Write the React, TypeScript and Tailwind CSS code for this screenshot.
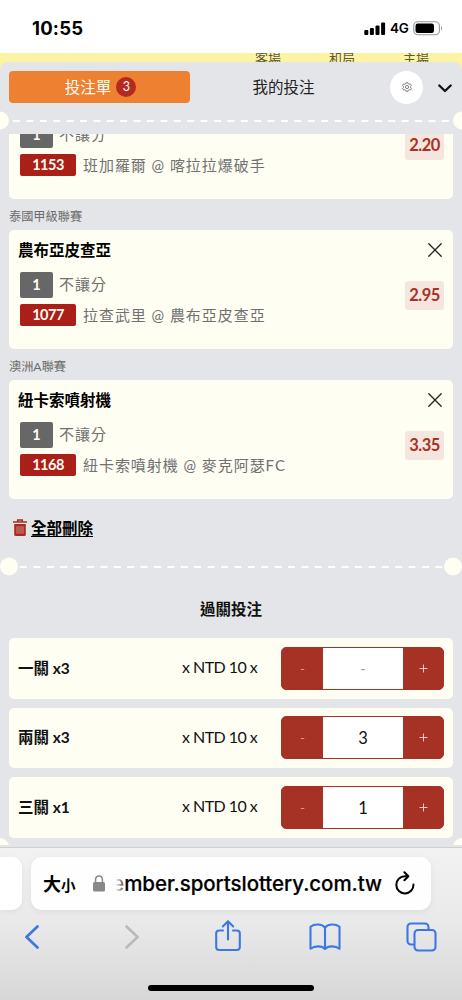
import React from "react";

const UI = "font-[Lato,'Noto_Sans_CJK_TC',sans-serif]";

type Bet = { league: string; pick: string; code: string; match: string; odds: string };

const bets: Bet[] = [
  { league: "", pick: "班加羅爾", code: "1153", match: "班加羅爾 @ 喀拉拉爆破手", odds: "2.20" },
  { league: "泰國甲級聯賽", pick: "農布亞皮查亞", code: "1077", match: "拉查武里 @ 農布亞皮查亞", odds: "2.95" },
  { league: "澳洲A聯賽", pick: "紐卡索噴射機", code: "1168", match: "紐卡索噴射機 @ 麥克阿瑟FC", odds: "3.35" },
];

const parlays = [
  { label: "一關 x3", value: "" },
  { label: "兩關 x3", value: "3" },
  { label: "三關 x1", value: "1" },
];

function StatusBar() {
  return (
    <div className="flex h-[53px] shrink-0 items-start justify-between bg-white pl-8 pr-[19px] pt-[18px]">
      <span className="font-[Inter,sans-serif] text-[18.5px] font-bold leading-5 tracking-[0.2px] text-black">10:55</span>
      <div className="flex h-5 items-center text-black">
        <svg width="22" height="13" viewBox="0 0 22 13" fill="currentColor">
          <rect x="0.3" y="8" width="4" height="5" rx="1" />
          <rect x="5.9" y="6" width="4" height="7" rx="1" />
          <rect x="11.5" y="3.4" width="4" height="9.6" rx="1" />
          <rect x="17.1" y="0.4" width="4" height="12.6" rx="1" />
        </svg>
        <span className="ml-[4px] w-[19px] font-[Inter,sans-serif] text-[13.5px] font-semibold leading-5 tracking-[-0.2px]">4G</span>
        <svg className="ml-[4px]" width="30" height="15" viewBox="0 0 30 15">
          <rect x="0.8" y="0.8" width="25.6" height="13" rx="4" fill="none" stroke="#999" strokeWidth="1.1" />
          <rect x="2.5" y="2.5" width="18.5" height="9.6" rx="2.3" fill="#000" />
          <path d="M28 5.2c1.4.5 1.4 3.7 0 4.2z" fill="#999" />
        </svg>
      </div>
    </div>
  );
}

function Gear() {
  return (
    <svg width="10" height="10" viewBox="0 0 20 20" fill="none" stroke="#444" strokeWidth="1.3" strokeLinejoin="round">
      <path d="M8 1.5h4l.6 2.2 2 .9 2.1-1 2 3.2-1.5 1.7v3l1.5 1.7-2 3.2-2.1-1-2 .9-.6 2.2H8l-.6-2.2-2-.9-2.1 1-2-3.2 1.5-1.7v-3L1.3 6.8l2-3.2 2.1 1 2-.9z" />
      <circle cx="10" cy="10" r="3.2" />
    </svg>
  );
}

function Dashes({ wide = false }: { wide?: boolean }) {
  return (
    <svg
      className={wide ? "w-full shrink-0" : "-mx-[9px] w-[462px] shrink-0"}
      width="462"
      height="19"
      viewBox="0 0 462 19"
    >
      <line
        x1={wide ? 13 : 20}
        x2={wide ? 450 : 443}
        y1="10"
        y2="10"
        stroke="#fffffa"
        strokeWidth="2.2"
        strokeDasharray="7 6.4"
      />
      <circle cx={wide ? 0 : 9} cy="9.5" r="9" fill="#fffef2" />
      <circle cx={wide ? 462 : 453} cy="9.5" r="9" fill="#fffef2" />
    </svg>
  );
}

function BetCard({ bet }: { bet: Bet }) {
  return (
    <div>
      <div className="flex h-[31px] items-center pt-[5px] text-[12.2px] leading-4 text-[#6b6b6b]">{bet.league}</div>
      <div className="flex h-[119px] justify-between rounded-[5px] bg-[#fefef3] pl-[9px] pr-[9px]">
        <div>
          <div className="mt-[10px] h-5 text-[15.5px] font-bold leading-5 text-black">{bet.pick}</div>
          <div className="ml-[2px] mt-3 flex h-[26px] items-center">
            <span className="flex h-[26px] w-[33px] items-center justify-center rounded-[2px] bg-[#676767] pb-px text-[14.5px] font-bold text-[#fefef3]">1</span>
            <span className="ml-[6px] pb-[2px] text-[15px] leading-5 tracking-[0.95px] text-[#717171]">不讓分</span>
          </div>
          <div className="ml-[2px] mt-[6px] flex h-[22px] items-center">
            <span className="flex h-[22px] w-14 items-center justify-center rounded-[2px] bg-[#aa1f18] text-[14.5px] font-bold tracking-[-0.5px] text-[#fefef3]">{bet.code}</span>
            <span className="ml-[7px] whitespace-nowrap text-[15px] leading-5 tracking-[0.95px] text-[#717171]">{bet.match}</span>
          </div>
        </div>
        <div className="flex flex-col items-end">
          <svg className="mr-[2px] mt-[13px]" width="14" height="14" viewBox="0 0 14 14" stroke="#222" strokeWidth="1.3" strokeLinecap="round">
            <path d="M.8.8l12.4 12.4M13.2.8L.8 13.2" />
          </svg>
          <div className="mt-6 flex h-[29px] w-[39px] items-center justify-center rounded-[3px] bg-[#f4e6df] text-[16.5px] font-bold tracking-[-0.5px] text-[#a83226]">{bet.odds}</div>
        </div>
      </div>
    </div>
  );
}

function Stepper({ value }: { value: string }) {
  return (
    <div className="flex h-[43px] w-[163px] overflow-hidden rounded-[5px] border border-[#a63225] bg-[#a63225] text-[14px] font-light text-[#f3d6d0]">
      <button className="flex w-[41px] items-center justify-center">-</button>
      <div className="flex w-[80px] items-center justify-center bg-white text-[16.5px] font-normal text-[#111]">
        {value ? <span className="pt-[2px]">{value}</span> : <span className="text-[15px] text-[#999]">-</span>}
      </div>
      <button className="flex flex-1 items-center justify-center">
        <svg width="9" height="9" viewBox="0 0 9 9" stroke="#f3d6d0" strokeWidth="0.9">
          <path d="M.5 4.5h8M4.5.5v8" />
        </svg>
      </button>
    </div>
  );
}

function Trash() {
  return (
    <svg width="14" height="17" viewBox="0 0 14 17">
      <path d="M4.7 2.8V1.1h4.6v1.7M0 3.1h14" fill="none" stroke="#a82c22" strokeWidth="1.5" />
      <path d="M1.2 5h11.6v10.4q0 1.5-1.500 1.500H2.700q-1.500 0-1.500-1.500z" fill="#a82c22" />
      <path d="M4 7.200v7.500M6 7.200v7.500M8 7.200v7.500M10 7.200v7.500" stroke="#e2b0a9" strokeWidth=".7" />
    </svg>
  );
}

function BrowserBar() {
  return (
    <div className="flex h-[153px] shrink-0 flex-col border-t border-[#cfcfcf] bg-linear-to-b from-[#f2f2f3] via-[#e9e9ea] to-[#d8d7d8] pt-[9px]">
      <div className="flex h-[53px] gap-[9px]">
        <div className="w-[22px] rounded-r-[10px] bg-white shadow-[0_2px_6px_rgba(0,0,0,0.05)]" />
        <div className="flex w-[400px] items-center rounded-[11px] bg-[#fefefe] pl-3 shadow-[0_2px_6px_rgba(0,0,0,0.06)]">
          <div className="flex w-[34px] shrink-0 items-baseline whitespace-nowrap font-['Noto_Sans_CJK_TC',sans-serif] font-bold leading-6 text-black">
            <span className="text-[18px]">大</span>
            <span className="text-[14.5px]">小</span>
          </div>
          <svg className="ml-[16px] shrink-0" width="12" height="17" viewBox="0 0 12 17">
            <rect x="0" y="7" width="12" height="9.5" rx="1.5" fill="#88888b" />
            <path d="M2.6 8V4.300a3.4 3.4 0 0 1 6.800 0V8" fill="none" stroke="#88888b" strokeWidth="1.5" />
          </svg>
          <div className="ml-2 flex w-[269px] shrink-0 justify-end whitespace-nowrap font-[Inter,sans-serif] text-[20.5px] font-medium leading-7 tracking-[-0.05px] text-black [-webkit-text-stroke:0.2px]">
            <span className="bg-linear-to-r from-white from-30% to-[#555] bg-clip-text text-transparent [-webkit-text-stroke:0]">e</span>
            <span>mber.sportslottery.com.tw</span>
          </div>
          <svg className="ml-[13px] shrink-0 -translate-y-[1px]" width="20" height="24" viewBox="0 0 20 24" fill="none" stroke="#000" strokeWidth="2" strokeLinecap="round" strokeLinejoin="round">
            <path d="M18.500 13.600A8.600 8.600 0 1 1 9.900 5.200H13.200M9.400 1.300l4 4-4 4" />
          </svg>
        </div>
      </div>
      <div className="mt-[7px] flex h-10 items-center pl-[25px] pr-[25px] text-[#3b78e7]">
        <svg width="14" height="24" viewBox="0 0 14 24" fill="none" stroke="currentColor" strokeWidth="2.7" strokeLinecap="round" strokeLinejoin="round">
          <path d="M12.5 1.5L1.5 12l11 10.5" />
        </svg>
        <svg className="ml-[86px]" width="14" height="24" viewBox="0 0 14 24" fill="none" stroke="#b9b9bb" strokeWidth="2.6" strokeLinecap="round" strokeLinejoin="round">
          <path d="M1.5 1.5L12.5 12l-11 10.5" />
        </svg>
        <svg className="ml-[76px] -translate-y-px" width="26" height="32" viewBox="0 0 26 32" fill="none" stroke="currentColor" strokeWidth="2.100" strokeLinecap="round" strokeLinejoin="round">
          <path d="M8 10.500H4.200a3 3 0 0 0-3 3V27a3 3 0 0 0 3 3h17.600a3 3 0 0 0 3-3V13.500a3 3 0 0 0-3-3H18M13 19.500V1.500M7.800 6.400L13 1.200l5.200 5.200" />
        </svg>
        <svg className="ml-[68px]" width="32" height="28" viewBox="0 0 32 28" fill="none" stroke="currentColor" strokeWidth="2.100" strokeLinejoin="round">
          <path d="M16 4.500C13 .8 5.500.6 1.500 3.800v22c4-3.300 11.500-3.300 14.500.2 3-3.500 10.500-3.500 14.500-.2v-22C26.500.6 19 .8 16 4.500zM16 4.500V26" />
        </svg>
        <svg className="ml-[65px]" width="31" height="30" viewBox="0 0 31 30" fill="none" stroke="currentColor" strokeWidth="2.100">
          <path d="M8.500 22.500H5A3.500 3.500 0 0 1 1.500 19V5A3.500 3.500 0 0 1 5 1.500h14A3.500 3.500 0 0 1 22.500 5v3" />
          <rect x="8.500" y="8" width="21" height="20.500" rx="3.500" />
        </svg>
      </div>
      <div className="mt-[28px] flex justify-center">
        <div className="h-[6px] w-[166px] rounded-full bg-black" />
      </div>
    </div>
  );
}

export default function App() {
  return (
    <div className={`${UI} flex h-[1000px] w-[462px] flex-col overflow-hidden bg-white`}>
      <StatusBar />
      <div className="flex h-[794px] shrink-0 flex-col overflow-hidden bg-[#fcf3a3]">
        <div className="flex h-[9px] shrink-0 overflow-hidden pl-[231px] text-[13px] leading-[14px] text-[#5e5839]">
          <div className="-mt-[2px] w-[74px] text-center">客場</div>
          <div className="-mt-[2px] w-[74px] text-center">和局</div>
          <div className="-mt-[2px] w-[74px] text-center">主場</div>
        </div>
        <div className="flex h-[785px] shrink-0 flex-col overflow-hidden rounded-t-[8px] bg-[#e4e5e8]">
          <div className="flex h-[49px] shrink-0 items-center pl-[9px] pt-px">
            <div className="flex h-[32px] w-[181px] items-center justify-center rounded-[4px] bg-[#ee8032] pl-[2px] text-[15.5px] text-[#fefef3]">
              <span className="leading-5">投注單</span>
              <span className="ml-[5px] flex h-5 w-5 items-center justify-center rounded-full bg-[#b52a1f] text-[12.5px]">3</span>
            </div>
            <div className="w-[187px] text-center text-[15.5px] leading-5 text-[#222]">我的投注</div>
            <div className="ml-[13px] flex h-[33px] w-[33px] items-center justify-center rounded-full bg-white">
              <Gear />
            </div>
            <svg className="ml-[15px] mt-[2px]" width="14" height="9" viewBox="0 0 14 9" fill="none" stroke="#111" strokeWidth="2.3" strokeLinecap="round" strokeLinejoin="round">
              <path d="M1.3 1.5L7 7l5.700-5.500" />
            </svg>
          </div>
          <Dashes wide />
          <div className="mt-1 flex h-[711px] shrink-0 flex-col overflow-hidden px-[9px]">
            <div className="-mt-[85px] shrink-0">
              {bets.map((bet) => (
                <BetCard key={bet.code} bet={bet} />
              ))}
            </div>
            <div className="flex h-[58px] shrink-0 items-center pb-px pl-1">
              <Trash />
              <span className="ml-[4px] text-[15.5px] font-bold leading-5 text-black underline decoration-1 underline-offset-2">全部刪除</span>
            </div>
            <Dashes />
            <div className="flex h-[62px] shrink-0 items-center justify-center pt-[5px] text-[15.5px] font-bold text-[#111]">過關投注</div>
            <div className="flex shrink-0 flex-col gap-[9px]">
              {parlays.map((p) => (
                <div key={p.label} className="flex h-[60.5px] items-center rounded-[5px] bg-[#fefef3] px-[9px]">
                  <span className="w-[164px] text-[15.5px] font-bold text-[#111]">{p.label}</span>
                  <span className="w-[99px] whitespace-nowrap pb-[2px] text-[16px] tracking-[-0.55px] text-[#111]">x NTD 10 x</span>
                  <Stepper value={p.value} />
                </div>
              ))}
            </div>
            <div className="-mx-[9px] flex h-[18px] shrink-0 justify-between overflow-hidden">
              <div className="-ml-[9px] h-[18px] w-[18px] rounded-full bg-[#fffef2]" />
              <div className="-mr-[9px] h-[18px] w-[18px] rounded-full bg-[#fffef2]" />
            </div>
          </div>
        </div>
      </div>
      <BrowserBar />
    </div>
  );
}
